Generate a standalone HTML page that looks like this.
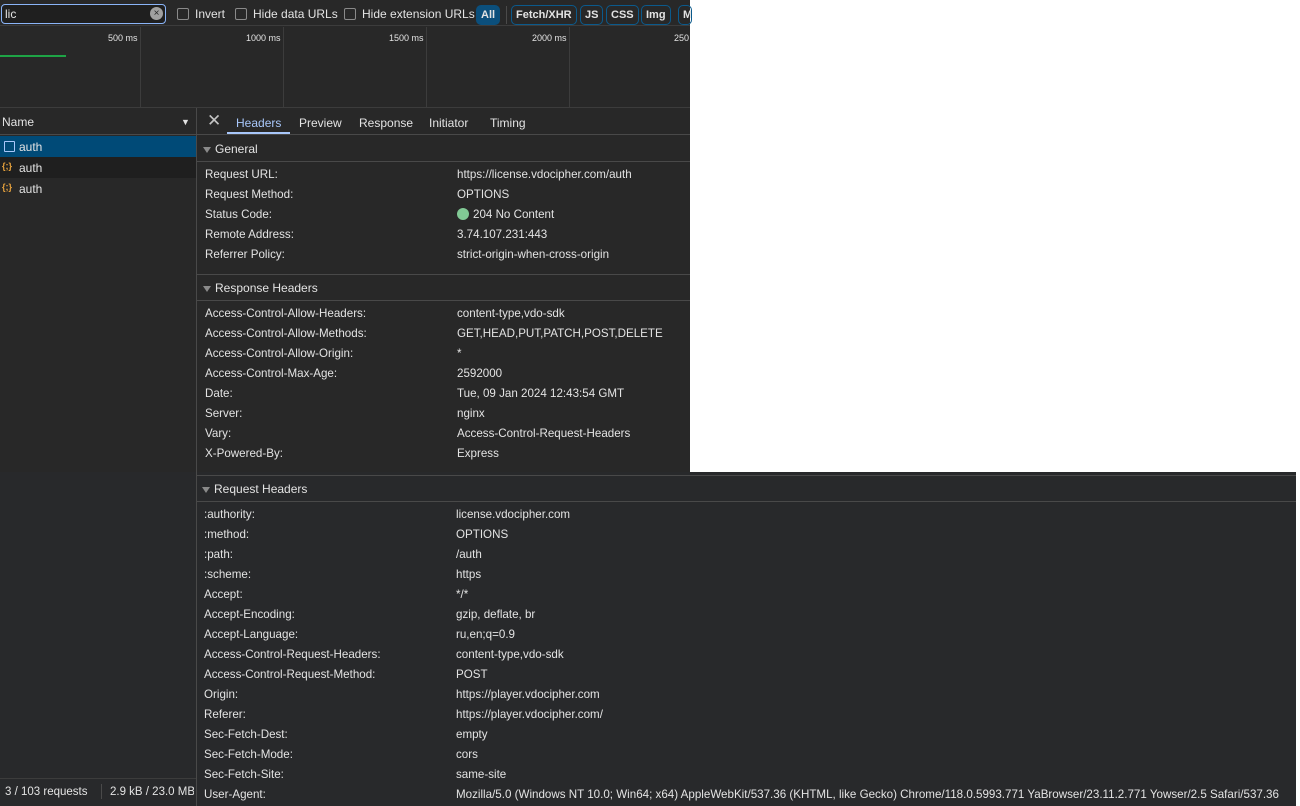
<!DOCTYPE html>
<html><head><meta charset="utf-8"><style>
*{margin:0;padding:0;box-sizing:border-box}
body{width:1300px;height:806px;background:#fff;font-family:"Liberation Sans",sans-serif;font-size:12px;color:#e3e3e3;position:relative;overflow:hidden}
.a{position:absolute;white-space:nowrap}
.dk{background:#282828}
.row{position:absolute;height:20px;line-height:20px;white-space:nowrap;font-size:11.6px;margin-top:1px}
.hl{position:absolute;height:1px;background:#494949}
.sec{position:absolute;height:26px;line-height:26px;font-size:12px;padding-left:18px}
.sec:before{content:"";position:absolute;left:6px;top:11px;border-left:4px solid transparent;border-right:4px solid transparent;border-top:6px solid #8a8a8a}
.cb{display:inline-block;width:12px;height:12px;border:1px solid #8a8a8a;border-radius:2px;vertical-align:-2px;margin-right:6px}
.pill{position:absolute;top:5px;height:20px;line-height:18px;border:1px solid #0b5a8c;border-radius:5px;padding:0 4px;font-weight:bold;font-size:11px;color:#e3e3e3}
.tm{position:absolute;top:33px;font-size:9px;color:#e3e3e3}
.vl{position:absolute;width:1px;background:#3c3c3c}
</style></head><body>
<div class="a dk" style="left:0;top:0;width:690px;height:472px"></div>
<div class="a dk" style="left:0;top:472px;width:1296px;height:334px;background:#28292b"></div>
<div class="a" style="left:0;top:0;width:690px;height:26px;background:#282828;border-bottom:1px solid #3c3c3c"></div>
<div class="a" style="left:1px;top:4px;width:165px;height:20px;border:1px solid #8ab4f8;border-radius:4px;background:#1f1f1f;padding-left:3px;line-height:18px;font-size:12px">lic</div>
<div class="a" style="left:150px;top:7px;width:13px;height:13px;border-radius:50%;background:#a0a0a0;color:#282828;font-size:10px;line-height:13px;text-align:center">×</div>
<div class="a" style="left:177px;top:7px;line-height:14px;font-size:12px"><span class="cb"></span>Invert</div>
<div class="a" style="left:235px;top:7px;line-height:14px;font-size:12px"><span class="cb"></span>Hide data URLs</div>
<div class="a" style="left:344px;top:7px;line-height:14px;font-size:12px"><span class="cb"></span>Hide extension URLs</div>
<div class="pill" style="left:476px;background:#0b4f7c;border-color:#0b4f7c">All</div>
<div class="a" style="left:506px;top:6px;width:1px;height:18px;background:#4a4a4a"></div>
<div class="pill" style="left:511px">Fetch/XHR</div>
<div class="pill" style="left:580px">JS</div>
<div class="pill" style="left:606px">CSS</div>
<div class="pill" style="left:641px">Img</div>
<div class="pill" style="left:678px;width:14px;overflow:hidden">M</div>
<div class="vl" style="left:140px;top:27px;height:80px"></div>
<div class="vl" style="left:283px;top:27px;height:80px"></div>
<div class="vl" style="left:426px;top:27px;height:80px"></div>
<div class="vl" style="left:569px;top:27px;height:80px"></div>
<div class="tm" style="left:108px">500 ms</div>
<div class="tm" style="left:246px">1000 ms</div>
<div class="tm" style="left:389px">1500 ms</div>
<div class="tm" style="left:532px">2000 ms</div>
<div class="tm" style="left:674px">250</div>
<div class="a" style="left:0;top:55px;width:66px;height:2px;background:#1ea446"></div>
<div class="a" style="left:0;top:107px;width:690px;height:1px;background:#3c3c3c"></div>
<div class="a" style="left:0;top:108px;width:196px;height:27px;background:#282828;border-bottom:1px solid #494949;line-height:28px;padding-left:2px;font-size:12px">Name<span style="position:absolute;left:181px;top:0;font-size:9px">▼</span></div>
<div class="a" style="left:0;top:136px;width:196px;height:21px;background:#004a77;line-height:22px;padding-left:19px">auth</div>
<div class="a" style="left:4px;top:141px;width:11px;height:11px;border:1px solid #a8c7fa;border-radius:1px"></div>
<div class="a" style="left:0;top:157px;width:196px;height:21px;background:#1f1f1f;line-height:22px;padding-left:19px">auth</div>
<div class="a" style="left:0;top:178px;width:196px;height:21px;line-height:22px;padding-left:19px">auth</div>
<div class="a" style="left:2px;top:161px;font-size:9px;color:#e8a33d;font-weight:bold">{;}</div>
<div class="a" style="left:2px;top:182px;font-size:9px;color:#e8a33d;font-weight:bold">{;}</div>
<div class="a" style="left:0;top:778px;width:196px;height:1px;background:#3c3c3c"></div>
<div class="a" style="left:5px;top:786px;font-size:11.5px">3 / 103 requests</div>
<div class="a" style="left:101px;top:784px;width:1px;height:15px;background:#4a4a4a"></div>
<div class="a" style="left:110px;top:786px;font-size:11.5px;width:84px;overflow:hidden">2.9 kB / 23.0 MB</div>
<div class="a" style="left:196px;top:108px;width:1px;height:698px;background:#494949"></div>
<div class="a" style="left:197px;top:108px;width:493px;height:27px;background:#282828;border-bottom:1px solid #494949"></div>
<div class="a" style="left:207px;top:111px;font-size:17px;color:#c4c4c4">✕</div>
<div class="a" style="left:236px;top:116px;color:#a8c7fa">Headers</div>
<div class="a" style="left:227px;top:132px;width:63px;height:2px;background:#a8c7fa"></div>
<div class="a" style="left:299px;top:116px">Preview</div>
<div class="a" style="left:359px;top:116px">Response</div>
<div class="a" style="left:429px;top:116px">Initiator</div>
<div class="a" style="left:490px;top:116px">Timing</div>
<div class="sec" style="left:197px;top:136px">General</div>
<div class="hl" style="left:197px;top:161px;width:493px"></div>
<div class="row" style="left:205px;top:164px">Request URL:</div><div class="row" style="left:457px;top:164px">https://license.vdocipher.com/auth</div>
<div class="row" style="left:205px;top:184px">Request Method:</div><div class="row" style="left:457px;top:184px">OPTIONS</div>
<div class="row" style="left:205px;top:204px">Status Code:</div><div class="row" style="left:457px;top:204px"><span style="display:inline-block;width:12px;height:12px;border-radius:50%;background:#81c995;vertical-align:-2px;margin-right:4px"></span>204 No Content</div>
<div class="row" style="left:205px;top:224px">Remote Address:</div><div class="row" style="left:457px;top:224px">3.74.107.231:443</div>
<div class="row" style="left:205px;top:244px">Referrer Policy:</div><div class="row" style="left:457px;top:244px">strict-origin-when-cross-origin</div>
<div class="hl" style="left:197px;top:274px;width:493px"></div>
<div class="sec" style="left:197px;top:275px">Response Headers</div>
<div class="hl" style="left:197px;top:300px;width:493px"></div>
<div class="row" style="left:205px;top:303px">Access-Control-Allow-Headers:</div><div class="row" style="left:457px;top:303px">content-type,vdo-sdk</div>
<div class="row" style="left:205px;top:323px">Access-Control-Allow-Methods:</div><div class="row" style="left:457px;top:323px">GET,HEAD,PUT,PATCH,POST,DELETE</div>
<div class="row" style="left:205px;top:343px">Access-Control-Allow-Origin:</div><div class="row" style="left:457px;top:343px">*</div>
<div class="row" style="left:205px;top:363px">Access-Control-Max-Age:</div><div class="row" style="left:457px;top:363px">2592000</div>
<div class="row" style="left:205px;top:383px">Date:</div><div class="row" style="left:457px;top:383px">Tue, 09 Jan 2024 12:43:54 GMT</div>
<div class="row" style="left:205px;top:403px">Server:</div><div class="row" style="left:457px;top:403px">nginx</div>
<div class="row" style="left:205px;top:423px">Vary:</div><div class="row" style="left:457px;top:423px">Access-Control-Request-Headers</div>
<div class="row" style="left:205px;top:443px">X-Powered-By:</div><div class="row" style="left:457px;top:443px">Express</div>
<div class="hl" style="left:196px;top:475px;width:1100px"></div>
<div class="sec" style="left:196px;top:476px">Request Headers</div>
<div class="hl" style="left:196px;top:501px;width:1100px"></div>
<div class="row" style="left:204px;top:504px">:authority:</div><div class="row" style="left:456px;top:504px">license.vdocipher.com</div>
<div class="row" style="left:204px;top:524px">:method:</div><div class="row" style="left:456px;top:524px">OPTIONS</div>
<div class="row" style="left:204px;top:544px">:path:</div><div class="row" style="left:456px;top:544px">/auth</div>
<div class="row" style="left:204px;top:564px">:scheme:</div><div class="row" style="left:456px;top:564px">https</div>
<div class="row" style="left:204px;top:584px">Accept:</div><div class="row" style="left:456px;top:584px">*/*</div>
<div class="row" style="left:204px;top:604px">Accept-Encoding:</div><div class="row" style="left:456px;top:604px">gzip, deflate, br</div>
<div class="row" style="left:204px;top:624px">Accept-Language:</div><div class="row" style="left:456px;top:624px">ru,en;q=0.9</div>
<div class="row" style="left:204px;top:644px">Access-Control-Request-Headers:</div><div class="row" style="left:456px;top:644px">content-type,vdo-sdk</div>
<div class="row" style="left:204px;top:664px">Access-Control-Request-Method:</div><div class="row" style="left:456px;top:664px">POST</div>
<div class="row" style="left:204px;top:684px">Origin:</div><div class="row" style="left:456px;top:684px">https://player.vdocipher.com</div>
<div class="row" style="left:204px;top:704px">Referer:</div><div class="row" style="left:456px;top:704px">https://player.vdocipher.com/</div>
<div class="row" style="left:204px;top:724px">Sec-Fetch-Dest:</div><div class="row" style="left:456px;top:724px">empty</div>
<div class="row" style="left:204px;top:744px">Sec-Fetch-Mode:</div><div class="row" style="left:456px;top:744px">cors</div>
<div class="row" style="left:204px;top:764px">Sec-Fetch-Site:</div><div class="row" style="left:456px;top:764px">same-site</div>
<div class="row" style="left:204px;top:784px">User-Agent:</div><div class="row" style="left:456px;top:784px;font-size:11.6px">Mozilla/5.0 (Windows NT 10.0; Win64; x64) AppleWebKit/537.36 (KHTML, like Gecko) Chrome/118.0.5993.771 YaBrowser/23.11.2.771 Yowser/2.5 Safari/537.36</div>
</body></html>
